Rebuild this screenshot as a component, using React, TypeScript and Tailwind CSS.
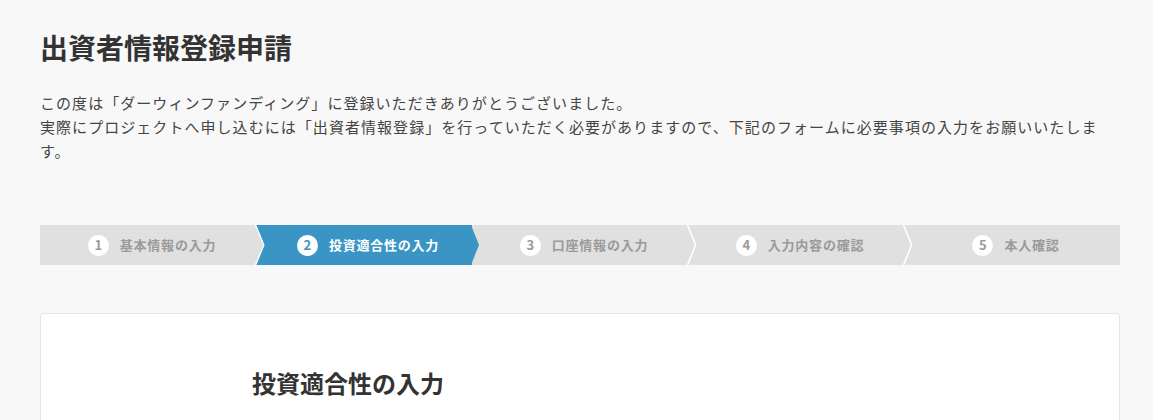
const steps = [
  { no: 1, label: "基本情報の入力" },
  { no: 2, label: "投資適合性の入力" },
  { no: 3, label: "口座情報の入力" },
  { no: 4, label: "入力内容の確認" },
  { no: 5, label: "本人確認" },
];

const current = 2;

function StepBar() {
  return (
    <div className="flex h-10">
      {steps.map((s, i) => {
        const active = s.no === current;
        const fill = active ? "#3a95c4" : "#e0e0e0";
        return (
          <div
            key={s.no}
            className={
              "relative flex flex-1 items-center justify-center pl-2 " +
              (active ? "bg-[#3a95c4] text-white" : "bg-[#e0e0e0] text-[#9a9a9a]")
            }
          >
            <span
              className={
                "mr-[11px] flex h-[21px] w-[21px] items-center justify-center rounded-full bg-white text-[13px] font-bold " +
                (active ? "text-[#3a95c4]" : "text-[#9a9a9a]")
              }
            >
              {s.no}
            </span>
            <span className="text-[13px] font-bold tracking-[0.06em]">{s.label}</span>
            {i < steps.length - 1 && (
              <svg
                className="absolute left-full top-0 z-10 -ml-px"
                width="12"
                height="40"
                viewBox="0 0 12 40"
              >
                <polygon points="0,0 8,20 0,40" fill={fill} />
                {!active && (
                  <polyline
                    points="0.5,0 8.7,20 0.5,40"
                    fill="none"
                    stroke="#ffffff"
                    strokeWidth="1.6"
                  />
                )}
              </svg>
            )}
          </div>
        );
      })}
    </div>
  );
}

export default function App() {
  return (
    <div
      className="h-[420px] overflow-hidden bg-[#f8f8f8] pt-[28px] text-[#333]"
      style={{ fontFamily: '"Noto Sans CJK JP", "Noto Sans", sans-serif' }}
    >
      <div className="ml-10 w-[1080px]">
        <h1 className="text-[28px] font-bold leading-[39px] text-[#333]">出資者情報登録申請</h1>
        <div className="mt-6 text-[15px] leading-6 tracking-[0.07em] text-[#444]">
          <p>この度は「ダーウィンファンディング」に登録いただきありがとうございました。</p>
          <p>
            実際にプロジェクトへ申し込むには「出資者情報登録」を行っていただく必要がありますので、下記のフォームに必要事項の入力をお願いいたします。
          </p>
        </div>
        <div className="mt-[62px]">
          <StepBar />
        </div>
        <div className="mt-12 h-[300px] rounded border border-[#e4e4e4] bg-white pl-[211px] pt-[51px]">
          <h2 className="text-[24px] font-bold leading-9 text-[#333]">投資適合性の入力</h2>
        </div>
      </div>
    </div>
  );
}
